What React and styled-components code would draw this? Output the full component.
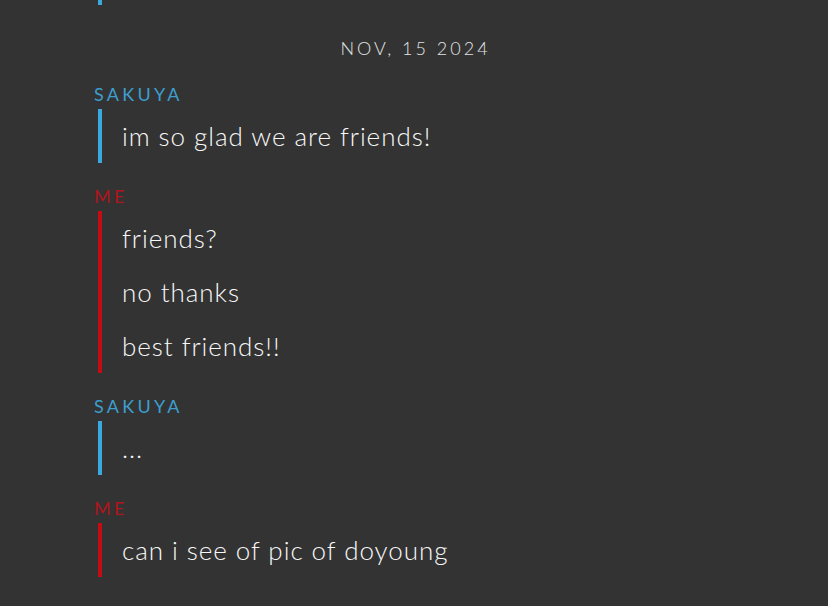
import React from "react";
import styled, { createGlobalStyle } from "styled-components";

const Global = createGlobalStyle`
  html, body { margin: 0; padding: 0; background: #333333; }
  body { font-family: Lato, "Open Sans", sans-serif; -webkit-font-smoothing: antialiased; }
`;

const Page = styled.div`
  width: 828px;
  height: 606px;
  background: #333333;
  overflow: hidden;
  display: flex;
  flex-direction: column;
  padding-left: 94px;
  box-sizing: border-box;
`;

const Stub = styled.div`
  width: 4px;
  height: 5px;
  margin-left: 4px;
  background: #3aa9de;
`;

const DateDivider = styled.div`
  margin: 31px 0 24px -94px;
  width: 828px;
  text-align: center;
  font-size: 18px;
  font-weight: 300;
  line-height: 24px;
  letter-spacing: 3px;
  text-indent: 3px;
  color: #e4e4e4;
`;

const Group = styled.div`
  display: flex;
  flex-direction: column;
  margin-bottom: 23px;
`;

const Label = styled.div`
  font-size: 18px;
  font-weight: 400;
  line-height: 20px;
  letter-spacing: 3.3px;
  color: ${(p) => (p.$me ? "#b0141c" : "#3c9fce")};
  margin-bottom: 5px;
`;

const Lines = styled.div`
  margin-left: 4px;
  border-left: 4px solid ${(p) => (p.$me ? "#c40d12" : "#3aa9de")};
  padding-left: 20px;
`;

const Line = styled.div`
  font-size: 26px;
  font-weight: 300;
  line-height: 54px;
  height: 54px;
  letter-spacing: 0.95px;
  color: #f8f8f8;
  white-space: nowrap;
`;

const groups = [
  { me: false, name: "SAKUYA", lines: ["im so glad we are friends!"] },
  { me: true, name: "ME", lines: ["friends?", "no thanks", "best friends!!"] },
  { me: false, name: "SAKUYA", lines: ["..."] },
  { me: true, name: "ME", lines: ["can i see of pic of doyoung"] },
];

export default function App() {
  return (
    <>
      <Global />
      <Page>
        <Stub />
        <DateDivider>NOV, 15 2024</DateDivider>
        {groups.map((g, i) => (
          <Group key={i}>
            <Label $me={g.me}>{g.name}</Label>
            <Lines $me={g.me}>
              {g.lines.map((l, j) => (
                <Line key={j}>{l}</Line>
              ))}
            </Lines>
          </Group>
        ))}
      </Page>
    </>
  );
}
